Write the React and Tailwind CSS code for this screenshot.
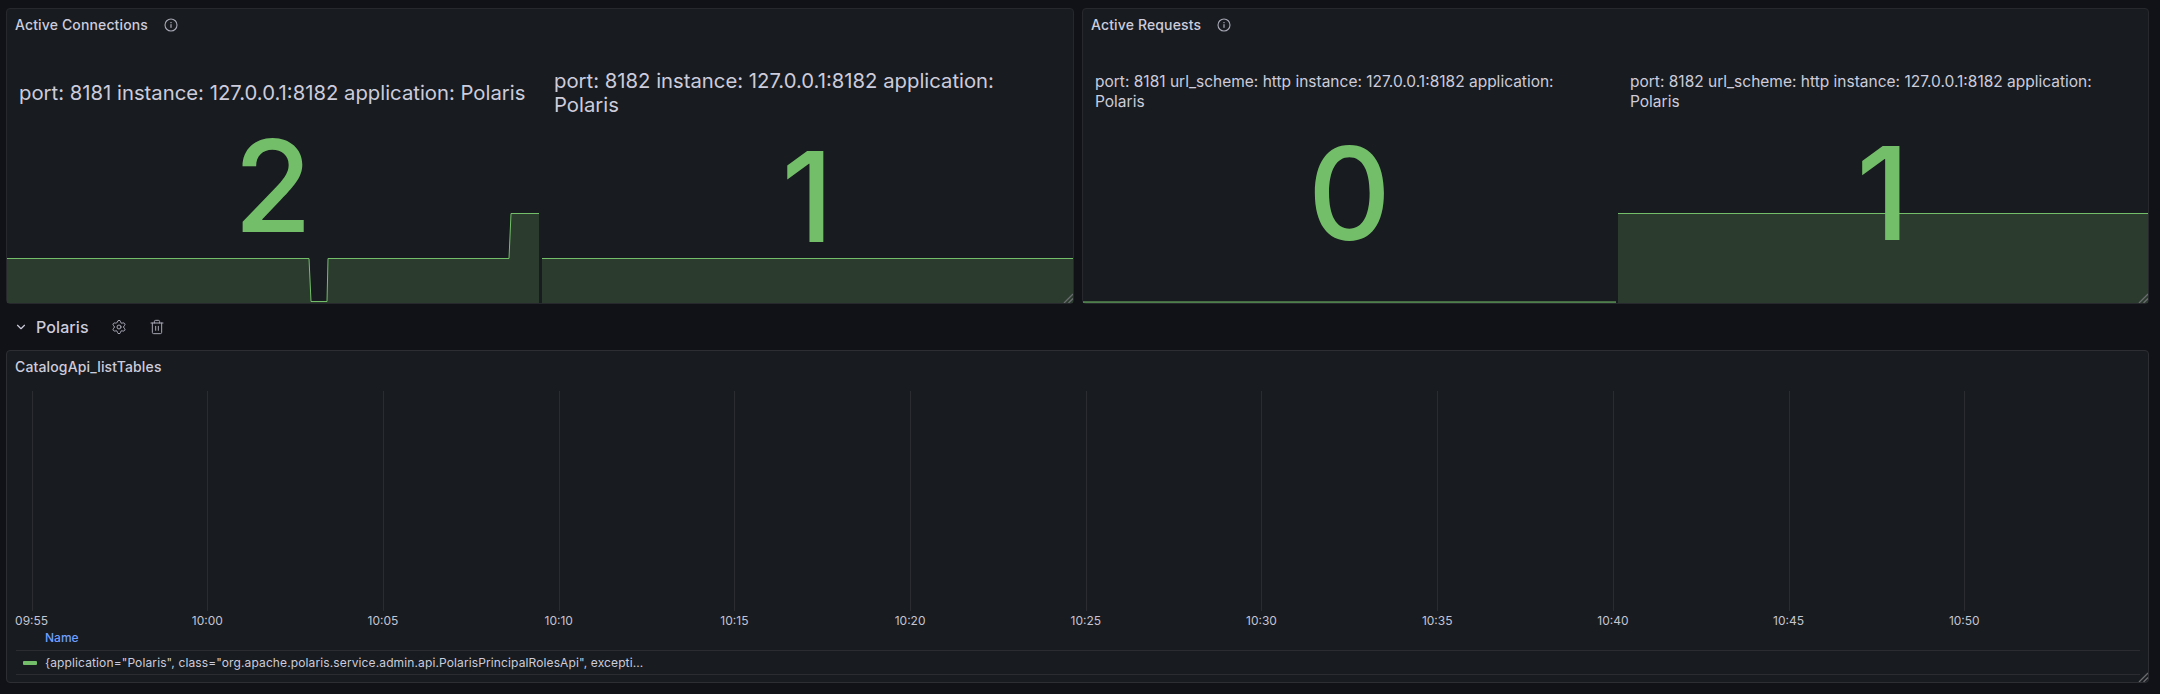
import React from "react";
import { ChevronDown, Settings, Trash2 } from "lucide-react";

const Info = () => (
  <svg width="14" height="14" viewBox="0 0 14 14" fill="none" className="text-[#ccccdc] opacity-80">
    <circle cx="7" cy="7" r="6" stroke="currentColor" strokeWidth="1.1" />
    <rect x="6.4" y="6.2" width="1.2" height="3.6" fill="currentColor" />
    <rect x="6.4" y="4" width="1.2" height="1.2" fill="currentColor" />
  </svg>
);

const Resize = () => (
  <svg width="10" height="10" viewBox="0 0 10 10" className="absolute right-0 bottom-0">
    <path d="M1 10L10 1M5.5 10L10 5.5" stroke="#6b6c70" strokeWidth="1.3" fill="none" />
  </svg>
);

const Spark = ({ w, points }) => {
  const h = 90;
  const line = points.map((p) => p.join(",")).join(" ");
  const area = `0,${h} ${line} ${w},${h}`;
  return (
    <svg width={w} height={h} className="absolute left-0 bottom-0 block">
      <polygon points={area} fill="#2b3c2e" />
      <polyline points={line} fill="none" stroke="#73bf69" strokeWidth="1" />
    </svg>
  );
};

const StatCell = ({ label, value, w, points, labelClass, pad, valueClass }) => (
  <div className="relative h-full overflow-hidden" style={{ width: w }}>
    <Spark w={w} points={points} />
    <div className={"relative " + pad}>
      <div className={"text-[#ccccdc] " + labelClass}>{label}</div>
    </div>
    <div className={"absolute inset-x-0 text-center font-medium text-[#73bf69] " + valueClass}>{value}</div>
  </div>
);

const PanelHeader = ({ title, info }) => (
  <div className="flex h-[24px] items-center pl-[8px] pt-[7px]">
    <span className="text-[14px] font-medium leading-[24px] tracking-[0.14px] text-[#ccccdc]">{title}</span>
    {info && <span className="ml-[16px] flex"><Info /></span>}
  </div>
);

const ticks = ["09:55","10:00","10:05","10:10","10:15","10:20","10:25","10:30","10:35","10:40","10:45","10:50"];

export default function App() {
  return (
    <div className="h-[694px] w-[2160px] overflow-hidden bg-[#111217] pl-[6px] pr-[11px] pt-[8px] font-['Inter',sans-serif] text-[#ccccdc]">
      <div className="flex h-[296px] gap-[8px]">
        <section className="relative flex h-full w-[1068px] flex-col rounded-[4px] border border-[#26282d] bg-[#181b1f]">
          <PanelHeader title="Active Connections" info />
          <div className="flex flex-1 gap-[3px] overflow-hidden pt-[2px]">
            <StatCell
              w={532}
              label="port: 8181 instance: 127.0.0.1:8182 application: Polaris"
              labelClass="text-[20.3px] leading-[24px]"
              pad="pl-[12px] pt-[46px]"
              value="2"
              valueClass="top-[74px] text-[127px] leading-[154px]"
              points={[[0,45],[302,45],[304,88],[320,88],[321,45],[502,45],[504,0],[532,0]].map(([x,y])=>[x,y+0.5])}
            />
            <StatCell
              w={531}
              label="port: 8182 instance: 127.0.0.1:8182 application: Polaris"
              labelClass="text-[20.3px] leading-[24px] pr-[16px]"
              pad="pl-[12px] pt-[34px]"
              value="1"
              valueClass="top-[86px] text-[125px] leading-[152px]"
              points={[[0,45.5],[531,45.5]]}
            />
          </div>
          <Resize />
        </section>
        <section className="relative flex h-full w-[1067px] flex-col rounded-[4px] border border-[#26282d] bg-[#181b1f]">
          <PanelHeader title="Active Requests" info />
          <div className="flex flex-1 gap-[2px] overflow-hidden pt-[2px]">
            <StatCell
              w={533}
              label="port: 8181 url_scheme: http instance: 127.0.0.1:8182 application: Polaris"
              labelClass="text-[15.5px] leading-[19.5px] pr-[24px]"
              pad="pl-[12px] pt-[37px]"
              value="0"
              valueClass="top-[80px] text-[129px] leading-[156px]"
              points={[[0,89],[533,89]]}
            />
            <StatCell
              w={530}
              label="port: 8182 url_scheme: http instance: 127.0.0.1:8182 application: Polaris"
              labelClass="text-[15.5px] leading-[19.5px] pr-[24px]"
              pad="pl-[12px] pt-[37px]"
              value="1"
              valueClass="top-[80px] text-[129px] leading-[156px]"
              points={[[0,0.5],[530,0.5]]}
            />
          </div>
          <Resize />
        </section>
      </div>

      <div className="flex h-[46px] items-center pl-[8px] pb-[1px]">
        <ChevronDown size={14} strokeWidth={2} className="text-[#ccccdc]" />
        <span className="ml-[8px] text-[16px] font-medium tracking-[0.1px] text-[#ccccdc]">Polaris</span>
        <Settings size={16} strokeWidth={1.5} className="ml-[22px] text-[#ccccdc] opacity-80" />
        <Trash2 size={16} strokeWidth={1.5} className="ml-[22px] text-[#ccccdc] opacity-80" />
      </div>

      <section className="relative flex h-[333px] w-full flex-col rounded-[4px] border border-[#2c2e33] bg-[#181b1f]">
        <PanelHeader title="CatalogApi_listTables" />
        <div className="relative h-[275px] w-full">
          <svg width="2140" height="230" className="absolute left-0 top-[8px]">
            {ticks.map((t, i) => {
              const x = Math.round(24.6 + i * 175.7) + 0.5;
              return <line key={t} x1={x} x2={x} y1="8" y2="228" stroke="#2a2c31" strokeWidth="1" />;
            })}
          </svg>
          {ticks.map((t, i) => (
            <div
              key={t}
              className="absolute top-[238px] w-[60px] -translate-x-1/2 text-center text-[12px] leading-[16px] text-[#c4c4d2]"
              style={{ left: 24.6 + i * 175.7 }}
            >
              {t}
            </div>
          ))}
          <div className="absolute left-[38px] top-[255px] text-[12px] font-medium leading-[16px] text-[#6e9fff]">Name</div>
        </div>
        <div className="ml-[9px] mr-[8px] flex h-[25px] items-center border-y border-[#2a2c31]">
          <span className="ml-[7px] h-[4px] w-[14px] rounded-[1px] bg-[#73bf69]" />
          <span className="ml-[8px] text-[12px] leading-[16px] tracking-[0.12px] text-[#ccccdc]">
            {'{application="Polaris", class="org.apache.polaris.service.admin.api.PolarisPrincipalRolesApi", excepti...'}
          </span>
        </div>
        <Resize />
      </section>
    </div>
  );
}
